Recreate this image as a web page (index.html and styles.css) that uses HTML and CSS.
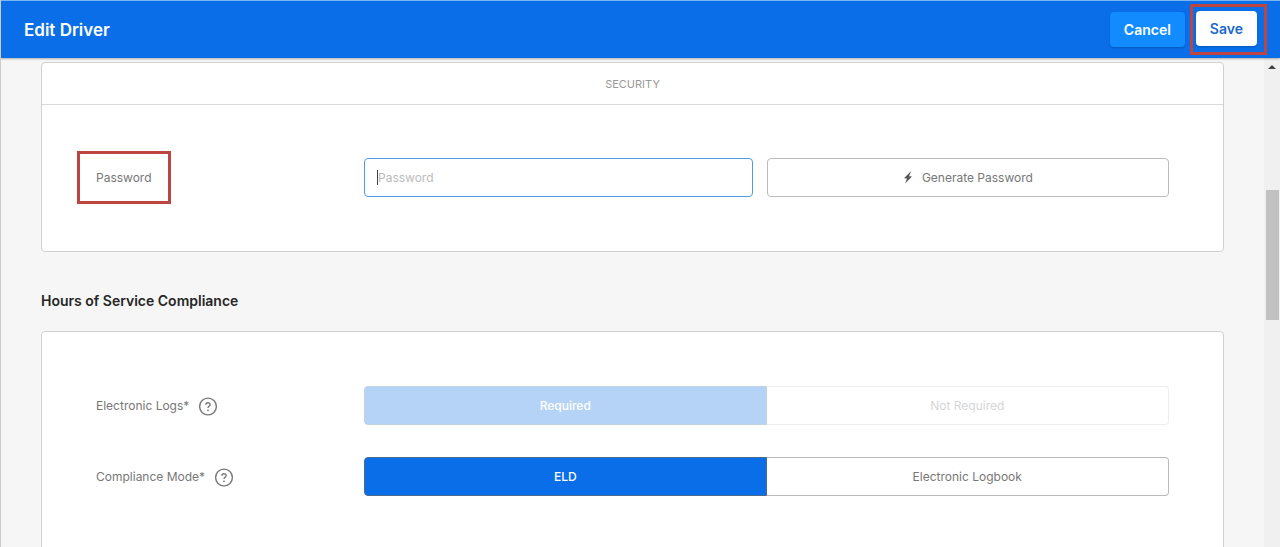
FILE: index.html
```
<!DOCTYPE html>
<html lang="en">
<head>
    <meta charset="UTF-8">
    <meta name="viewport" content="width=device-width, initial-scale=1.0">
    <link rel="stylesheet" href="styles.css">
    <title>Edit Driver</title>
</head>
<body>

    <header class="topbar">
        <h1 class="topbar-title">Edit Driver</h1>
        <button type="button" class="btn btn-cancel">Cancel</button>
        <div class="highlight highlight-save">
            <button type="submit" form="driverForm" class="btn btn-save">Save</button>
        </div>
    </header>

    <div class="page">
        <main class="content">
            <form id="driverForm">
                <!-- Security -->
                <section class="card">
                    <h2 class="card-header">SECURITY</h2>
                    <div class="card-body security-body">
                        <div class="row">
                            <div>
                                <label for="password" class="highlight highlight-label">Password</label>
                            </div>
                            <div class="password-fields">
                                <div class="input-wrap">
                                    <input type="password" id="password" class="input" placeholder="Password">
                                </div>
                                <button type="button" class="control generate">
                                    <svg width="10" height="14" viewBox="0 0 10 14" aria-hidden="true">
                                        <path d="M8.2 0 L1 7.2 L4 7.6 L2 12.6 L9 5.6 L6 5.2 Z" fill="#555"/>
                                    </svg>
                                    Generate Password
                                </button>
                            </div>
                        </div>
                    </div>
                </section>

                <!-- Hours of Service -->
                <h2 class="section-title">Hours of Service Compliance</h2>
                <section class="card">
                    <div class="card-body">
                        <div class="row">
                            <div class="label-group">
                                <span id="logsLabel">Electronic Logs*</span>
                                <svg class="help" width="20" height="20" viewBox="0 0 20 20" role="img" aria-label="Help">
                                    <circle cx="10" cy="10.5" r="8.4"/>
                                    <path d="M7.9 8.7 C7.9 6.1 12.1 6.1 12.1 8.6 C12.1 10.3 10 10.2 10 12"/>
                                    <circle class="help-dot" cx="10" cy="14.3" r="0.9"/>
                                </svg>
                            </div>
                            <div class="segmented" role="group" aria-labelledby="logsLabel">
                                <button type="button" class="control segment active" disabled>Required</button>
                                <button type="button" class="control segment" disabled>Not Required</button>
                            </div>
                        </div>
                        <div class="row">
                            <div class="label-group">
                                <span id="modeLabel">Compliance Mode*</span>
                                <svg class="help" width="20" height="20" viewBox="0 0 20 20" role="img" aria-label="Help">
                                    <circle cx="10" cy="10.5" r="8.4"/>
                                    <path d="M7.9 8.7 C7.9 6.1 12.1 6.1 12.1 8.6 C12.1 10.3 10 10.2 10 12"/>
                                    <circle class="help-dot" cx="10" cy="14.3" r="0.9"/>
                                </svg>
                            </div>
                            <div class="segmented" role="group" aria-labelledby="modeLabel">
                                <button type="button" class="control segment active">ELD</button>
                                <button type="button" class="control segment">Electronic Logbook</button>
                            </div>
                        </div>
                    </div>
                </section>
            </form>
        </main>

        <div class="scrollbar" aria-hidden="true">
            <svg width="8" height="4" viewBox="0 0 8 4"><path d="M0 4 L4 0 L8 4 Z" fill="#444"/></svg>
            <div class="scrollbar-thumb"></div>
        </div>
    </div>

</body>
</html>
```
FILE: styles.css
```
* {
    box-sizing: border-box;
}

body {
    margin: 0;
    height: 100vh;
    display: flex;
    flex-direction: column;
    overflow: hidden;
    border-left: 1px solid #ccc;
    background: #f6f6f6;
    color: #777;
    font-family: Inter, "Liberation Sans", sans-serif;
    font-size: 12px;
    line-height: 18px;
}

button,
input {
    font: inherit;
}

/* Top bar */
.topbar {
    display: flex;
    align-items: center;
    flex: none;
    padding: 3px 13px 3px 23px;
    border-top: 1px solid #7db5f2;
    background: #096ee8;
    box-shadow: 0 1px 2px rgba(0, 0, 0, 0.3);
    position: relative;
}

.topbar-title {
    flex: 1;
    margin: 0;
    color: #fff;
    font-size: 17px;
    font-weight: 600;
}

.btn {
    height: 35px;
    padding: 0 14px;
    border: 0;
    border-radius: 4px;
    font-size: 14px;
    font-weight: 600;
    box-shadow: 0 1px 2px rgba(0, 0, 0, 0.2);
}

.btn-cancel {
    margin-right: 5px;
    background: #118bff;
    color: #fff;
}

.btn-save {
    display: block;
    background: #fff;
    color: #1c69cb;
}

.highlight {
    border: 3px solid #bc4441;
}

.highlight-save {
    padding: 4px 7px 6px 3px;
}

/* Page */
.page {
    flex: 1;
    display: flex;
    min-height: 0;
}

.content {
    flex: 1;
    overflow: hidden;
    padding: 4px 40px 0;
}

.card {
    border: 1px solid #d0d0d0;
    border-radius: 4px;
    background: #fff;
}

.card-header {
    margin: 0;
    padding: 12px 12px 11px;
    border-bottom: 1px solid #d9d9d9;
    color: #999;
    font-size: 11px;
    font-weight: 400;
    text-align: center;
}

.card-body {
    display: grid;
    gap: 32px;
    padding: 54px;
}

.security-body {
    padding-top: 46px;
    padding-bottom: 47px;
}

.section-title {
    margin: 40px 0 21px;
    color: #262626;
    font-size: 14px;
    font-weight: 600;
}

.row {
    display: grid;
    grid-template-columns: 268px 1fr;
    align-items: center;
}

.label-group {
    display: flex;
    align-items: center;
    gap: 9px;
}

.highlight-label {
    display: inline-block;
    vertical-align: top;
    margin-left: -19px;
    padding: 15px 16px 14px;
}

.help {
    fill: none;
    stroke: #777;
    stroke-width: 1.4;
}

.help-dot {
    fill: #777;
    stroke: none;
}

/* Controls */
.password-fields {
    display: grid;
    grid-template-columns: 29fr 30fr;
    gap: 14px;
}

.input-wrap {
    position: relative;
}

/* text cursor */
.input-wrap::before {
    content: "";
    position: absolute;
    left: 13px;
    top: 12px;
    width: 1px;
    height: 15px;
    background: #444;
}

.input {
    display: block;
    width: 100%;
    height: 39px;
    padding: 0 13px;
    border: 1px solid #509be6;
    border-radius: 4px;
    background: #fff;
    outline: none;
}

.input::placeholder {
    color: #bbb;
}

.control {
    height: 39px;
    padding: 0 12px;
    border: 1px solid #bbb;
    border-radius: 4px;
    background: #fff;
    color: #777;
}

.generate {
    display: flex;
    align-items: center;
    justify-content: center;
    gap: 9px;
}

.segmented {
    display: grid;
    grid-template-columns: 1fr 1fr;
}

.segment:first-child {
    border-radius: 4px 0 0 4px;
}

.segment:last-child {
    border-left: 0;
    border-radius: 0 4px 4px 0;
}

.segment.active {
    border-color: #4d6a8f;
    background: #096ee8;
    color: #fff;
    font-weight: 500;
}

.segment:disabled {
    border-color: #eee;
    color: #d6d6d6;
}

.segment.active:disabled {
    border-color: #c3d3e6;
    background: #b5d2f7;
    color: #fff;
}

/* Scrollbar */
.scrollbar {
    display: flex;
    flex-direction: column;
    align-items: center;
    width: 16px;
    padding-top: 7px;
    background: #f0f0f0;
}

.scrollbar-thumb {
    width: 13px;
    height: 130px;
    margin-top: 121px;
    background: #c1c1c1;
}
```
